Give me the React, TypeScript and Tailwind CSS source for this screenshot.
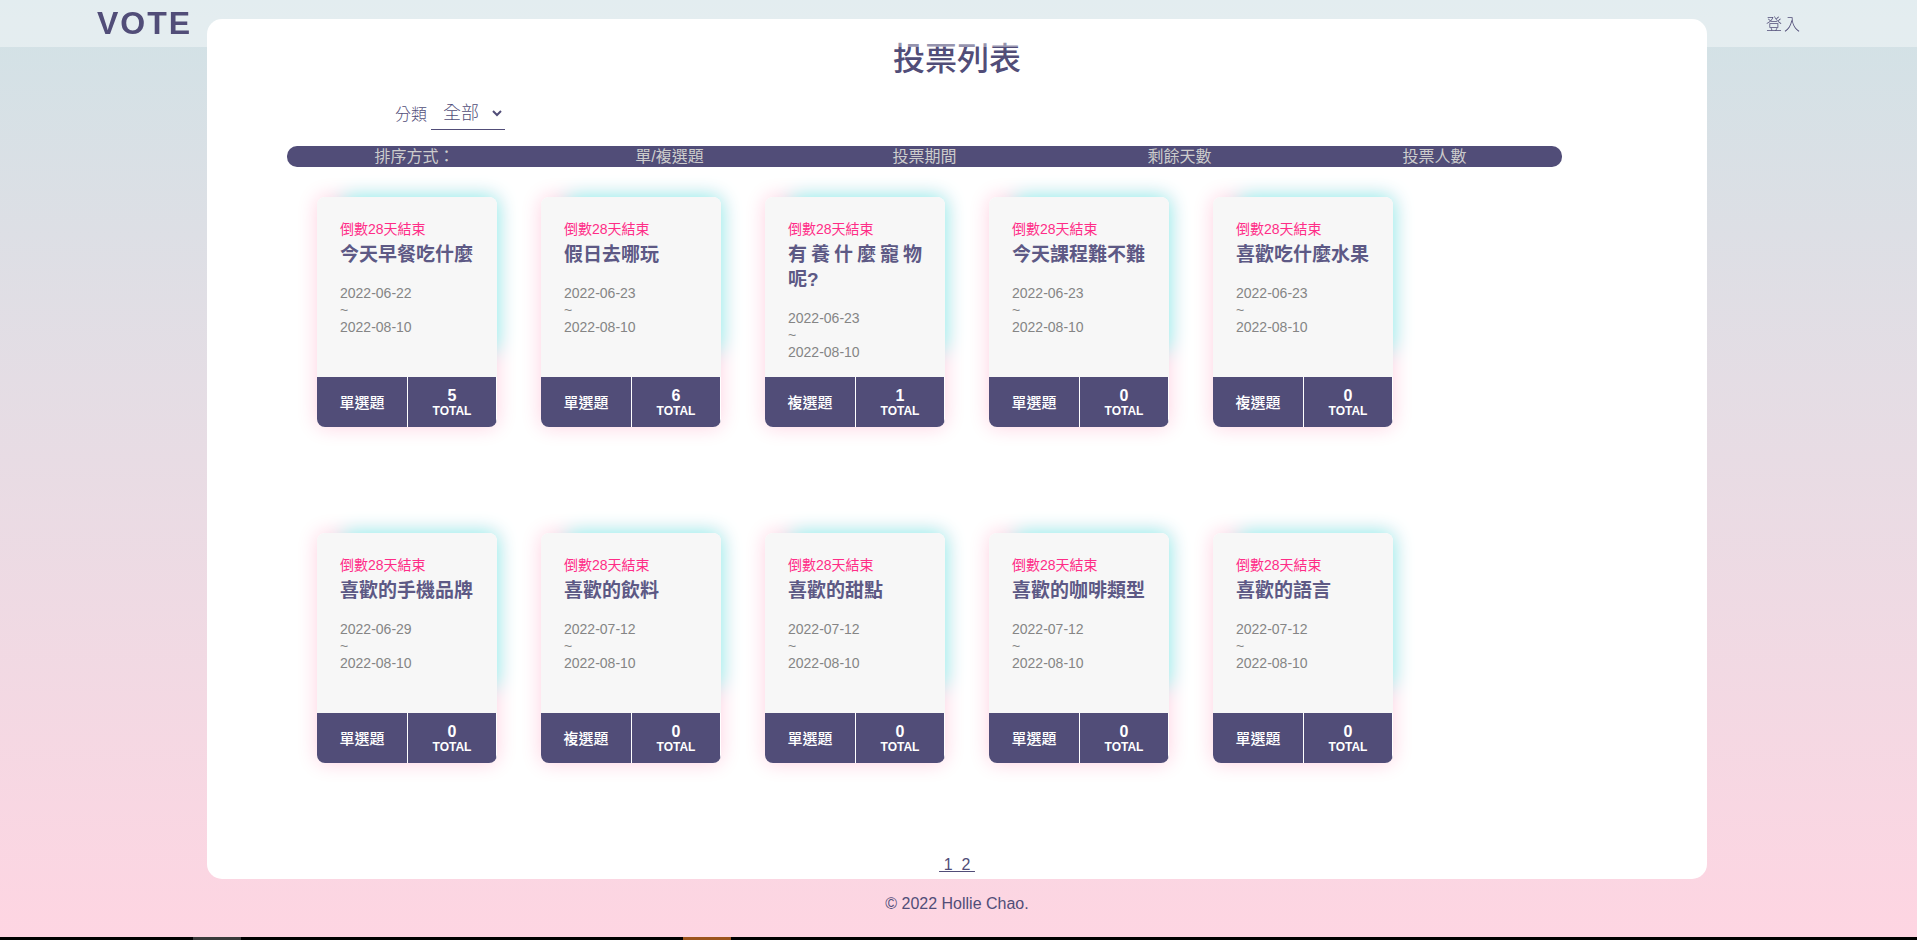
const FONT =
  "font-['Liberation_Sans','Noto_Sans_CJK_TC',sans-serif]";

const polls = [
  { title: '今天早餐吃什麼', start: '2022-06-22', type: '單選題', total: 5 },
  { title: '假日去哪玩', start: '2022-06-23', type: '單選題', total: 6 },
  { title: '有養什麼寵物呢?', start: '2022-06-23', type: '複選題', total: 1 },
  { title: '今天課程難不難', start: '2022-06-23', type: '單選題', total: 0 },
  { title: '喜歡吃什麼水果', start: '2022-06-23', type: '複選題', total: 0 },
  { title: '喜歡的手機品牌', start: '2022-06-29', type: '單選題', total: 0 },
  { title: '喜歡的飲料', start: '2022-07-12', type: '複選題', total: 0 },
  { title: '喜歡的甜點', start: '2022-07-12', type: '單選題', total: 0 },
  { title: '喜歡的咖啡類型', start: '2022-07-12', type: '單選題', total: 0 },
  { title: '喜歡的語言', start: '2022-07-12', type: '單選題', total: 0 },
];

const sorts = ['單/複選題', '投票期間', '剩餘天數', '投票人數'];

function PollCard({ title, start, type, total }: (typeof polls)[number]) {
  return (
    <a
      href="#"
      className="relative block w-[180px] rounded-lg shadow-[0_0_20px_rgba(255,20,100,0.2)]"
    >
      <span className="absolute top-0 right-0 h-[154px] w-[154px] rounded-lg shadow-[0_0_20px_#80fff6]" />
      <div className="relative h-[180px] rounded-t-lg bg-[#f7f7f7] px-[23px] pt-[22px]">
        <p className="text-sm leading-[20px] text-[#ff2d87]">倒數28天結束</p>
        <h3 className="pt-[3px] text-justify text-[19px] leading-[25px] font-bold text-[#5d5985] [text-justify:inter-character]">
          {title}
        </h3>
        <p className="pt-[18px] text-sm leading-[17px] text-[#858585]">
          {start}
          <br />~<br />
          2022-08-10
        </p>
      </div>
      <div className="relative flex h-[50px] overflow-hidden rounded-b-lg bg-[#514d78] text-white">
        <div className="flex w-[91px] items-center justify-center border-r border-white pt-0.5 text-[15px] font-medium">
          {type}
        </div>
        <div className="flex flex-1 flex-col items-center justify-center border-r border-white pt-0.5 font-bold">
          <span className="text-base leading-[16px]">{total}</span>
          <span className="text-xs leading-[14px]">TOTAL</span>
        </div>
      </div>
    </a>
  );
}

export default function App() {
  return (
    <div
      className={`flex min-h-screen flex-col bg-linear-to-b from-[#d1e2e6] to-[#fed5e2] text-[#514d78] ${FONT}`}
    >
      <header className="fixed inset-x-0 top-0 z-10 flex h-[47px] items-center justify-between bg-white/40 pr-[115px] pl-[97px]">
        <a href="#" className="pb-0.5 text-[32px] font-bold tracking-[2px]">
          VOTE
        </a>
        <a href="#" className="pt-0.5 font-light tracking-[2px]">
          登入
        </a>
      </header>

      <div className="pr-[3px]">
        <main className="mx-auto mt-[19px] min-h-[860px] w-full max-w-[1500px] rounded-[15px] bg-white px-20 pt-4">
          <h1 className="text-center text-[32px] leading-[48px] font-medium">投票列表</h1>
          <div className="mt-[14px] ml-[108px] flex h-[33px] items-center gap-1">
            <label htmlFor="category" className="pt-0.5 font-light">
              分類
            </label>
            <select
              id="category"
              className="h-full w-[74px] border-b border-[#514d78] bg-transparent pl-2 text-lg font-light"
            >
              <option>全部</option>
            </select>
          </div>
          <div className="mt-4 grid w-[1275px] max-w-full grid-cols-5 rounded-[10px] bg-[#514d78] text-center leading-[21px] text-[#cccccc]">
            <span>排序方式：</span>
            {sorts.map((s) => (
              <a key={s} href="#">
                {s}
              </a>
            ))}
          </div>
          <div className="mt-[30px] flex max-w-[1120px] flex-wrap gap-x-11 gap-y-[106px] pl-[30px]">
            {polls.map((p) => (
              <PollCard key={p.title} {...p} />
            ))}
          </div>
          <nav className="mt-[92px] text-center leading-[20px] underline">
            <a href="#">&nbsp;1&nbsp;</a>
            <a href="#">&nbsp;2&nbsp;</a>
          </nav>
        </main>

        <footer className="pt-[14px] text-center leading-[22px]">© 2022 Hollie Chao.</footer>
      </div>

      <div className="mt-auto flex h-[3px] bg-black">
        <span className="ml-[193px] w-12 bg-[#3a3a3a]" />
        <span className="ml-[442px] w-12 bg-[#9c541c]" />
      </div>
    </div>
  );
}
